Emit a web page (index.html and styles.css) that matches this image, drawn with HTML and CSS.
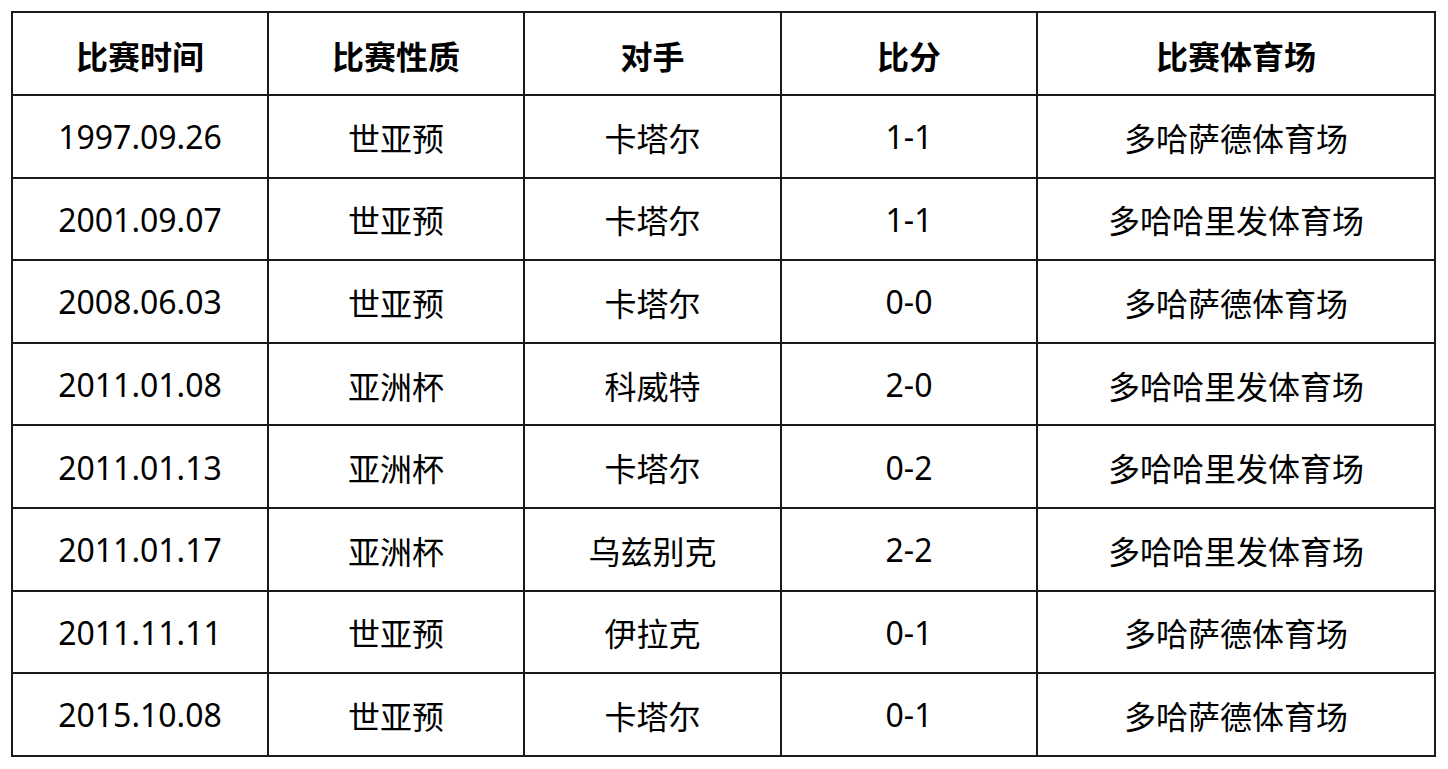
FILE: index.html
```html
<!DOCTYPE html>
<html lang="zh">
<head>
<meta charset="utf-8">
<link rel="stylesheet" href="styles.css">
</head>
<body>
<table class="matches">
<colgroup>
<col class="c-date"><col class="c-type"><col class="c-opp"><col class="c-score"><col class="c-venue">
</colgroup>
<thead>
<tr><th>比赛时间</th><th>比赛性质</th><th>对手</th><th>比分</th><th>比赛体育场</th></tr>
</thead>
<tbody>
<tr><td>1997.09.26</td><td>世亚预</td><td>卡塔尔</td><td>1-1</td><td>多哈萨德体育场</td></tr>
<tr><td>2001.09.07</td><td>世亚预</td><td>卡塔尔</td><td>1-1</td><td>多哈哈里发体育场</td></tr>
<tr><td>2008.06.03</td><td>世亚预</td><td>卡塔尔</td><td>0-0</td><td>多哈萨德体育场</td></tr>
<tr><td>2011.01.08</td><td>亚洲杯</td><td>科威特</td><td>2-0</td><td>多哈哈里发体育场</td></tr>
<tr><td>2011.01.13</td><td>亚洲杯</td><td>卡塔尔</td><td>0-2</td><td>多哈哈里发体育场</td></tr>
<tr><td>2011.01.17</td><td>亚洲杯</td><td>乌兹别克</td><td>2-2</td><td>多哈哈里发体育场</td></tr>
<tr><td>2011.11.11</td><td>世亚预</td><td>伊拉克</td><td>0-1</td><td>多哈萨德体育场</td></tr>
<tr><td>2015.10.08</td><td>世亚预</td><td>卡塔尔</td><td>0-1</td><td>多哈萨德体育场</td></tr>
</tbody>
</table>
</body>
</html>
```
FILE: styles.css
```css
html, body {
  margin: 0;
  padding: 0;
  background: #ffffff;
}
body {
  padding: 11px;
  font-family: "Noto Sans", "Noto Sans CJK SC", sans-serif;
  color: #000000;
}
.matches {
  border-collapse: collapse;
  table-layout: fixed;
  width: 1425px;
}
.c-date, .c-type, .c-score { width: 256px; }
.c-opp { width: 257px; }
.c-venue { width: 398px; }
.matches th,
.matches td {
  border: 2px solid #1a1a1a;
  text-align: center;
  vertical-align: middle;
  font-size: 32px;
  padding: 0;
  white-space: nowrap;
  box-sizing: border-box;
}
.matches th {
  height: 83px;
  font-weight: 700;
  padding-top: 2px;
}
.matches td {
  height: 82.6px;
  font-weight: 400;
  padding-top: 1px;
}
```
